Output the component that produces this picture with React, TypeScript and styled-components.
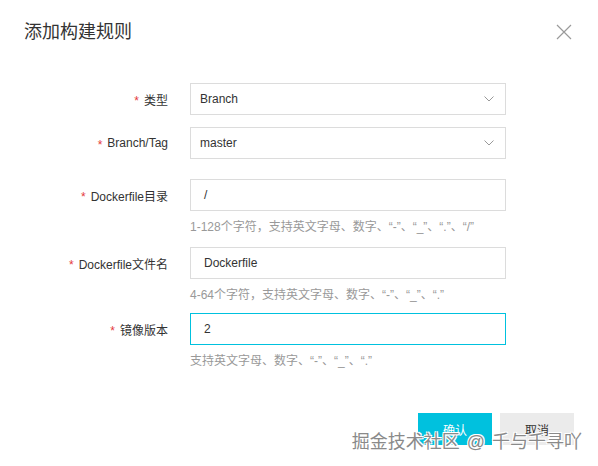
import React from "react";
import styled, { createGlobalStyle } from "styled-components";

const Global = createGlobalStyle`
  html, body { margin: 0; padding: 0; background: #fff; }
  body { font-family: "Liberation Sans", "Noto Sans CJK SC", sans-serif; color: #333; }
`;

const Dialog = styled.div`
  position: relative;
  width: 598px;
  height: 466px;
  background: #fff;
  box-sizing: border-box;
  overflow: hidden;
`;

const Header = styled.div`
  display: flex;
  align-items: center;
  justify-content: space-between;
  height: 64px;
  padding: 0 26px 0 24px;
  box-sizing: border-box;
`;

const Title = styled.h2`
  margin: 0;
  font-size: 18px;
  font-weight: 400;
  color: #333;
  line-height: 24px;
`;

const CloseBtn = styled.button`
  border: 0;
  background: none;
  padding: 0;
  width: 16px;
  height: 16px;
  display: flex;
  cursor: pointer;
`;

const Form = styled.div`
  display: flex;
  flex-direction: column;
  padding-top: 19px;
`;

const Row = styled.div<{ $mb: number }>`
  display: grid;
  grid-template-columns: 168px 316px;
  column-gap: 22px;
  margin-bottom: ${(p) => p.$mb}px;
`;

const Label = styled.label`
  height: 32px;
  display: flex;
  align-items: center;
  justify-content: flex-end;
  font-size: 12px;
  color: #333;
  white-space: nowrap;
`;

const Star = styled.span`
  color: #e4393c;
  margin-right: 5px;
  font-size: 12px;
  line-height: 12px;
  transform: translateY(2px);
`;

const Field = styled.div`
  display: flex;
  flex-direction: column;
`;

const Box = styled.div<{ $focus?: boolean; $pad: number }>`
  height: 32px;
  box-sizing: border-box;
  border: 1px solid ${(p) => (p.$focus ? "#00c1de" : "#dcdcdc")};
  display: flex;
  align-items: center;
  justify-content: space-between;
  padding: 0 11px 0 ${(p) => p.$pad}px;
  font-size: 12px;
  color: #333;
  background: #fff;
`;

const Hint = styled.div`
  margin-top: 8px;
  height: 16px;
  font-size: 12px;
  line-height: 16px;
  color: #999;
  white-space: nowrap;
`;

const Footer = styled.div`
  display: flex;
  justify-content: flex-end;
  gap: 8px;
  padding-right: 24px;
  margin-top: 44px;
`;

const Button = styled.button<{ $primary?: boolean }>`
  width: 74px;
  height: 32px;
  border: 0;
  font-family: inherit;
  font-size: 12px;
  background: ${(p) => (p.$primary ? "#00c1de" : "#ebebeb")};
  color: ${(p) => (p.$primary ? "#fff" : "#333")};
  cursor: pointer;
`;

const Watermark = styled.div`
  position: absolute;
  right: 16px;
  bottom: 14px;
  font-size: 18px;
  line-height: 20px;
  word-spacing: 2px;
  color: #8a8a8a;
  text-shadow: 0 0 1px #fff, 1px 1px 0 #fff, -1px -1px 0 #fff, 1px -1px 0 #fff, -1px 1px 0 #fff;
  white-space: nowrap;
  pointer-events: none;
`;

const Chevron = () => (
  <svg width="10" height="6" viewBox="0 0 10 6">
    <path d="M0.5 0.5 L5 5 L9.5 0.5" fill="none" stroke="#999" strokeWidth="1" />
  </svg>
);

const CloseIcon = () => (
  <svg width="16" height="16" viewBox="0 0 16 16">
    <path d="M1 1 L15 15 M15 1 L1 15" stroke="#9a9a9a" strokeWidth="1.2" fill="none" />
  </svg>
);

type FieldDef = {
  label: string;
  value: string;
  select?: boolean;
  focus?: boolean;
  hint?: string;
  mb: number;
};

const fields: FieldDef[] = [
  { label: "类型", value: "Branch", select: true, mb: 12 },
  { label: "Branch/Tag", value: "master", select: true, mb: 20 },
  {
    label: "Dockerfile目录",
    value: "/",
    hint: "1-128个字符，支持英文字母、数字、“-”、“_”、“.”、“/”",
    mb: 12,
  },
  {
    label: "Dockerfile文件名",
    value: "Dockerfile",
    hint: "4-64个字符，支持英文字母、数字、“-”、“_”、“.”",
    mb: 10,
  },
  {
    label: "镜像版本",
    value: "2",
    focus: true,
    hint: "支持英文字母、数字、“-”、“_”、“.”",
    mb: 0,
  },
];

export default function App() {
  return (
    <>
      <Global />
      <Dialog>
        <Header>
          <Title>添加构建规则</Title>
          <CloseBtn aria-label="close">
            <CloseIcon />
          </CloseBtn>
        </Header>
        <Form>
          {fields.map((f) => (
            <Row key={f.label} $mb={f.mb}>
              <Label>
                <Star>*</Star>
                {f.label}
              </Label>
              <Field>
                <Box $focus={f.focus} $pad={f.select ? 9 : 13}>
                  <span>{f.value}</span>
                  {f.select && <Chevron />}
                </Box>
                {f.hint && <Hint>{f.hint}</Hint>}
              </Field>
            </Row>
          ))}
        </Form>
        <Footer>
          <Button $primary>确认</Button>
          <Button>取消</Button>
        </Footer>
        <Watermark>掘金技术社区 @ 千与千寻吖</Watermark>
      </Dialog>
    </>
  );
}
